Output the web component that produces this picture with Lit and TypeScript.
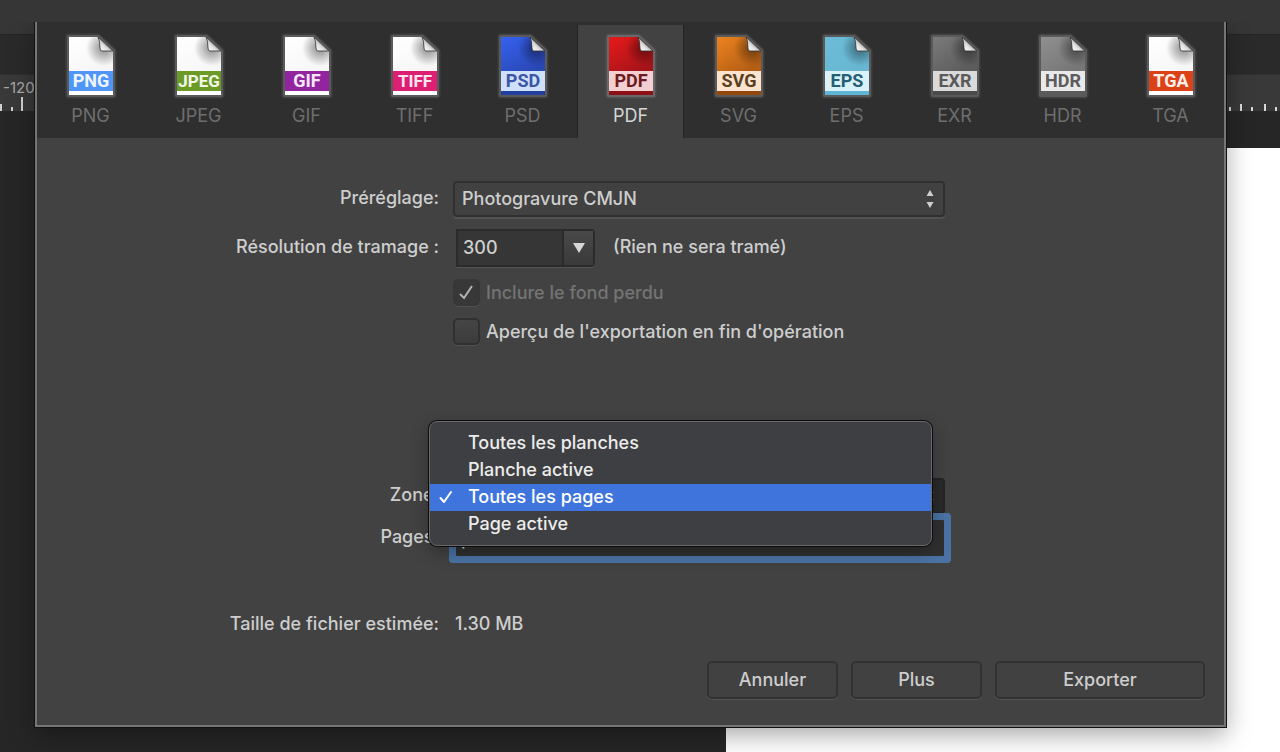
import { LitElement, html, svg, css } from "lit";
import { customElement, property, state } from "lit/decorators.js";
import { classMap } from "lit/directives/class-map.js";

interface Format {
  name: string;
  top: string;
  bottom: string;
  band: string;
  ink: string;
  foot: string;
}

const FORMATS: Format[] = [
  { name: "PNG", top: "#ffffff", bottom: "#f6f6f6", band: "#5096f8", ink: "#eef5ff", foot: "#ffffff" },
  { name: "JPEG", top: "#ffffff", bottom: "#f6f6f6", band: "#6b9a26", ink: "#f2f8e6", foot: "#ffffff" },
  { name: "GIF", top: "#ffffff", bottom: "#f6f6f6", band: "#9324a0", ink: "#f7e6fa", foot: "#ffffff" },
  { name: "TIFF", top: "#ffffff", bottom: "#f6f6f6", band: "#dd1f73", ink: "#ffe4f0", foot: "#ffffff" },
  { name: "PSD", top: "#3561f0", bottom: "#2a48b4", band: "#cfe0fa", ink: "#3c55a6", foot: "#233f9c" },
  { name: "PDF", top: "#e81a1a", bottom: "#a5141a", band: "#f4cfd2", ink: "#6d1a20", foot: "#8c1015" },
  { name: "SVG", top: "#ec8320", bottom: "#b45e14", band: "#fbe3cd", ink: "#59401f", foot: "#92480f" },
  { name: "EPS", top: "#6bbcd8", bottom: "#68b6d2", band: "#d9f1f8", ink: "#255f73", foot: "#5fb6d4" },
  { name: "EXR", top: "#7a7a7a", bottom: "#5c5c5c", band: "#dadada", ink: "#5a5a5a", foot: "#4a4a4a" },
  { name: "HDR", top: "#909090", bottom: "#767676", band: "#e9e9e9", ink: "#5c5c5c", foot: "#5a5a5a" },
  { name: "TGA", top: "#ffffff", bottom: "#f6f6f6", band: "#dc4218", ink: "#fff0e8", foot: "#ffffff" },
];

const ZONES = ["Toutes les planches", "Planche active", "Toutes les pages", "Page active"];

@customElement("format-icon")
class FormatIcon extends LitElement {
  @property({ attribute: false }) format: Format = FORMATS[0];

  static styles = css`
    :host { display: block; line-height: 0; }
    .name { font: 700 18px Roboto, "Liberation Sans", sans-serif; }
    .name.long { font-size: 17px; }
  `;

  render() {
    const f = this.format;
    return html`
      <svg width="52" height="66" viewBox="-4 -4 52 66" aria-hidden="true">
        <defs>
          <linearGradient id="paper" x1="0" y1="0" x2="0.5" y2="1">
            <stop offset="0" stop-color=${f.top} />
            <stop offset="0.75" stop-color=${f.bottom} />
          </linearGradient>
          <radialGradient id="shade" gradientUnits="userSpaceOnUse" cx="35" cy="11" r="18">
            <stop offset="0.2" stop-color="#000" stop-opacity="0.36" />
            <stop offset="1" stop-color="#000" stop-opacity="0" />
          </radialGradient>
          <linearGradient id="fold" x1="0" y1="1" x2="0.7" y2="0.3">
            <stop offset="0" stop-color="#ffffff" />
            <stop offset="0.5" stop-color="#e4e4e4" />
            <stop offset="1" stop-color="#777" />
          </linearGradient>
        </defs>
        <path d="M0 0H29L44 14V58H0Z" fill="none" stroke="#fff" stroke-opacity="0.08" stroke-width="7" stroke-linejoin="round" />
        <path d="M0 0H29L44 14V58H0Z" fill="none" stroke="#fff" stroke-opacity="0.14" stroke-width="4" stroke-linejoin="round" />
        <path d="M0 0H29L44 14V58H0Z" fill="url(#paper)" />
        <path d="M0 0H29L44 14V34H0Z" fill="url(#shade)" />
        <path d="M29 0L44 14H33Q31 14 31 11Q31 4 29 0Z" fill="url(#fold)" stroke="#333" stroke-opacity="0.8" stroke-width="1" />
        <rect x="0" y="34" width="44" height="20" fill=${f.band} />
        <rect x="0" y="54" width="44" height="4" fill=${f.foot} />
        ${svg`<text class=${classMap({ name: true, long: f.name.length > 3 })} x="22" y="50" text-anchor="middle" fill=${f.ink}>${f.name}</text>`}
      </svg>
    `;
  }
}

@customElement("zone-menu")
class ZoneMenu extends LitElement {
  @property() value = "";

  static styles = css`
    :host { display: block; }
    .menu {
      box-sizing: border-box;
      margin: 0;
      padding: 8px 0 7px;
      list-style: none;
      background: #3e3f42;
      border: 1px solid #69696b;
      border-radius: 8px;
      box-shadow: 0 0 0 1px #0c0c0c, 0 6px 18px rgba(0, 0, 0, 0.3);
    }
    .item {
      display: flex;
      align-items: center;
      width: 100%;
      height: 27px;
      padding: 0 9px 1px;
      border: 0;
      background: none;
      color: #ececec;
      font: inherit;
      text-align: left;
    }
    .item.on { background: #3f74dc; color: #fff; }
    .mark { flex: none; width: 29px; height: 14px; }
  `;

  private pick(zone: string) {
    this.dispatchEvent(new CustomEvent("pick", { detail: zone }));
  }

  render() {
    return html`
      <ul class="menu" role="listbox" aria-label="Zone">
        ${ZONES.map((zone) => {
          const on = zone === this.value;
          return html`<li role="presentation">
            <button class=${classMap({ item: true, on })} role="option" aria-selected=${on} @click=${() => this.pick(zone)}>
              <svg class="mark" viewBox="0 0 29 14" aria-hidden="true">
                ${on ? svg`<path d="M1.5 8L5 12L12 2" fill="none" stroke="#fff" stroke-width="2" stroke-linecap="round" stroke-linejoin="round" />` : ""}
              </svg>${zone}
            </button>
          </li>`;
        })}
      </ul>
    `;
  }
}

@customElement("app-root")
class AppRoot extends LitElement {
  @state() private active = "PDF";
  @state() private zone = "Toutes les pages";

  static styles = css`
    :host {
      display: block;
      position: relative;
      min-height: 100vh;
      overflow: hidden;
      background: #262626;
      color: #cecece;
      font: 500 18px/24px Inter, "Liberation Sans", sans-serif;
    }
    * { box-sizing: border-box; }
    .workspace { display: flex; flex-direction: column; min-height: 100vh; }
    .toolbar { height: 34px; background: #363636; }
    .context { height: 40px; background: #2a2a2a; border-top: 1px solid #242424; }
    .ruler {
      display: flex;
      justify-content: space-between;
      height: 37px;
      background: #393939;
      border-top: 1px solid #2e2e2e;
    }
    .ruler-text { font: 15px Inter, "Liberation Sans", sans-serif; }
    .canvas { display: flex; flex: 1; justify-content: flex-end; padding-top: 37px; background: #262627; }
    .page { width: 554px; background: #fff; }

    .dialog {
      position: absolute;
      top: 22px;
      left: 35px;
      right: 54px;
      background: #424242;
      border: solid #757575;
      border-width: 0 2px 2px;
      box-shadow: 0 0 0 1px #111, 0 8px 24px rgba(0, 0, 0, 0.35);
      clip-path: inset(0 -54px -40px -35px);
    }
    .tabs {
      display: grid;
      grid-template-columns: repeat(11, 1fr);
      gap: 3px;
      padding: 3px 1px 0;
      background: #2f2f2f;
    }
    .tab {
      display: flex;
      flex-direction: column;
      align-items: center;
      gap: 5px;
      height: 113px;
      padding: 8px 0 0;
      border: 0;
      background: none;
      color: #6e6e6e;
      font: inherit;
      font-weight: 400;
    }
    .tab.on { background: #424242; color: #d6d6d6; box-shadow: 0 0 0 1px #222; clip-path: inset(0 -1px); }

    .group {
      display: grid;
      grid-template-columns: 402fr 492fr 265fr;
      gap: 12px 14px;
      align-items: center;
    }
    .preset { padding-top: 43px; }
    .area { padding-top: 133px; row-gap: 6px; }
    .size { padding-top: 56px; }
    .label { grid-column: 1; padding-bottom: 3px; text-align: right; white-space: nowrap; }
    .field { grid-column: 2; display: flex; align-items: center; position: relative; }
    .select {
      appearance: none;
      width: 100%;
      height: 36px;
      padding: 0 7px;
      background: #414141;
      border: 2px solid #303030;
      border-radius: 4px;
      box-shadow: 0 2px 0 #525252;
      color: inherit;
      font: inherit;
    }
    .dark { background: #292929; border-color: #242424; box-shadow: none; }
    .arrows { position: absolute; right: 10px; top: 9px; pointer-events: none; }
    .combo {
      display: flex;
      width: 139px;
      height: 38px;
      margin: 0 18px 0 3px;
      background: #363636;
      border: 2px solid #2b2b2b;
      border-radius: 0 4px 4px 0;
      box-shadow: 0 1px 0 #545454;
    }
    .number {
      flex: 1;
      min-width: 0;
      padding: 0 5px;
      border: 0;
      background: none;
      color: inherit;
      font: inherit;
    }
    .drop {
      width: 31px;
      padding: 0;
      border: 0;
      border-left: 2px solid #2b2b2b;
      background: linear-gradient(#484848, #3a3a3a);
    }
    .note { padding-bottom: 3px; }
    .check { gap: 6px; height: 27px; }
    .box {
      appearance: none;
      flex: none;
      width: 27px;
      height: 27px;
      margin: 0;
      border: 2px solid #303030;
      border-radius: 5px;
      background: linear-gradient(#454545, #3c3c3c);
      box-shadow: 0 1px 0 #505050;
    }
    .box:disabled { background: #383838; border-color: #373737; }
    .tick { position: absolute; left: 5px; top: 5px; pointer-events: none; }
    .faded { color: #747474; }
    .pages {
      width: 100%;
      height: 36px;
      margin: 0 1px 0 3px;
      padding: 0 5px;
      border: 0;
      background: #303030;
      border-radius: 1px;
      box-shadow: 0 0 0 7px #4a73a4;
      color: inherit;
      font: inherit;
      outline: none;
    }
    .popup { position: absolute; z-index: 1; top: -57px; left: -24px; right: 13px; }
    .value { grid-column: 2; padding: 0 2px 3px; }

    .actions { display: flex; justify-content: flex-end; gap: 13px; padding: 22px 19px 26px; }
    .button {
      width: 131px;
      height: 38px;
      padding: 0 0 1px;
      background: #414141;
      border: 2px solid #323232;
      border-radius: 5px;
      box-shadow: 0 1px 0 #545454;
      color: inherit;
      font: inherit;
    }
    .button.main { width: 210px; }
  `;

  private arrows() {
    return html`<svg class="arrows" width="10" height="18" viewBox="0 0 10 18" aria-hidden="true">
      <path d="M1.5 6L5 0L8.5 6ZM1.5 12H8.5L5 18Z" fill="#cfcfcf" />
    </svg>`;
  }

  render() {
    return html`
      <div class="workspace">
        <div class="toolbar"></div>
        <div class="context"></div>
        <div class="ruler">
          <svg width="34" height="36" viewBox="0 0 34 36">
            <text class="ruler-text" x="3" y="18" fill="#a8a8a8">-120</text>
            <path d="M1 29V36M12 32V36M22 22V36" stroke="#d0d0d0" stroke-width="2" />
          </svg>
          <svg width="53" height="36" viewBox="0 0 53 36">
            <path d="M3 32V36M14 29V36M25 32V36M38 29V36M49 32V36" stroke="#d8d8d8" stroke-width="2" />
          </svg>
        </div>
        <div class="canvas"><div class="page"></div></div>
      </div>

      <section class="dialog" role="dialog">
        <nav class="tabs" role="tablist">
          ${FORMATS.map((f) => {
            const on = f.name === this.active;
            return html`<button class=${classMap({ tab: true, on })} role="tab" aria-selected=${on} @click=${() => (this.active = f.name)}>
              <format-icon .format=${f}></format-icon>${f.name}
            </button>`;
          })}
        </nav>

        <div class="group preset">
          <label class="label" for="preset">Préréglage:</label>
          <div class="field">
            <select class="select" id="preset"><option>Photogravure CMJN</option></select>
            ${this.arrows()}
          </div>

          <label class="label" for="dpi">Résolution de tramage :</label>
          <div class="field">
            <div class="combo">
              <input class="number" id="dpi" value="300" />
              <button class="drop" aria-haspopup="listbox">
                <svg width="12" height="10" viewBox="0 0 12 10" aria-hidden="true"><path d="M0 0H12L6 10Z" fill="#d6d6d6" /></svg>
              </button>
            </div>
            <span class="note">(Rien ne sera tramé)</span>
          </div>

          <div class="field check">
            <input class="box" type="checkbox" id="bleed" checked disabled />
            <svg class="tick" width="17" height="17" viewBox="0 0 17 17" aria-hidden="true">
              <path d="M2 10L6 14L14 2" fill="none" stroke="#b4b4b4" stroke-width="2" />
            </svg>
            <label class="faded" for="bleed">Inclure le fond perdu</label>
          </div>
          <div class="field check">
            <input class="box" type="checkbox" id="preview" />
            <label for="preview">Aperçu de l'exportation en fin d'opération</label>
          </div>
        </div>

        <div class="group area">
          <label class="label" for="zone">Zone:</label>
          <div class="field">
            <select class="select dark" id="zone" .value=${this.zone}>
              ${ZONES.map((z) => html`<option ?selected=${z === this.zone}>${z}</option>`)}
            </select>
            <svg class="arrows" width="10" height="18" viewBox="0 0 10 18" aria-hidden="true">
              <path d="M1 6L5 0L9 6ZM1 12H9L5 18Z" fill="#777" />
            </svg>
            <zone-menu class="popup" .value=${this.zone} @pick=${(e: CustomEvent) => (this.zone = e.detail)}></zone-menu>
          </div>
          <label class="label" for="pages">Pages:</label>
          <div class="field"><input class="pages" id="pages" value="p" /></div>
        </div>

        <div class="group size">
          <span class="label">Taille de fichier estimée:</span>
          <output class="value">1.30 MB</output>
        </div>

        <div class="actions">
          <button class="button">Annuler</button>
          <button class="button">Plus</button>
          <button class="button main">Exporter</button>
        </div>
      </section>
    `;
  }
}
